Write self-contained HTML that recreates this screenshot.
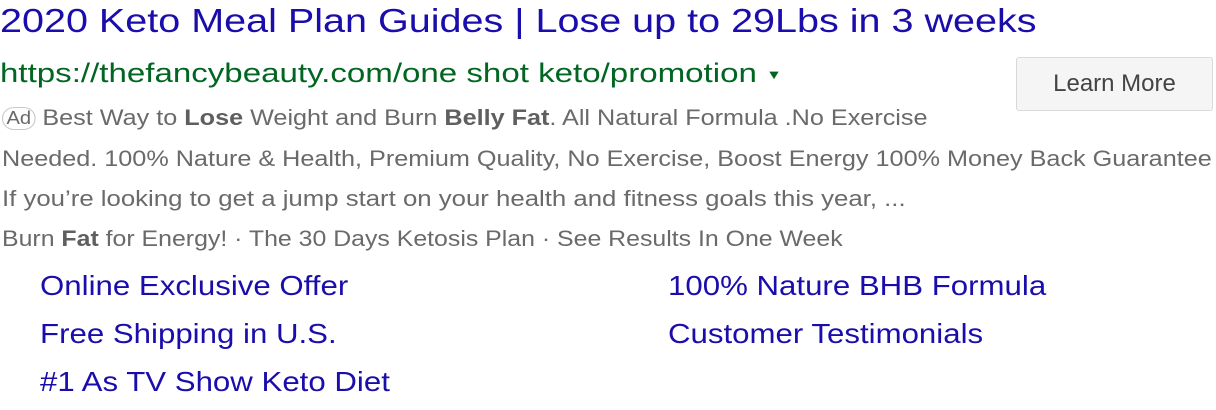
<html><head><style>
body{margin:0;width:1216px;height:410px;background:#fff;font-family:"Liberation Sans",Arial,sans-serif;position:relative;overflow:hidden}
div{position:absolute;white-space:nowrap;transform-origin:0 50%}
.t{left:0;top:3px;font-size:33.5px;color:#1a0dab;transform:scaleX(1.18)}
.u{left:0;top:58px;font-size:27px;color:#006621;transform:scaleX(1.225)}
.g{left:2px;font-size:22.5px;color:#6a6a6a;transform:scaleX(1.12)}
.g b{color:#5f5f5f}
.l{font-size:27.5px;color:#1a0dab;transform:scaleX(1.135)}
.ad{display:inline-block;border:1.5px solid #c8c8c8;border-radius:11px;font-size:18px;color:#6a6a6a;padding:0 3px;line-height:21px;vertical-align:1px;margin-right:6px}
.btn{left:1016px;top:57px;width:195px;height:52px;background:#f5f5f5;border:1px solid #d9d9d9;border-radius:3px;font-size:24px;color:#444;text-align:center;line-height:52px}
</style></head><body>
<div class="t">2020 Keto Meal Plan Guides | Lose up to 29Lbs in 3 weeks</div>
<div class="u">https://thefancybeauty.com/one shot keto/promotion <span style="font-size:13px;vertical-align:3px">▼</span></div>
<div class="btn">Learn More</div>
<div class="g" style="top:105px;left:2px"><span class="ad">Ad</span>Best Way to <b>Lose</b> Weight and Burn <b>Belly Fat</b>. All Natural Formula .No Exercise</div>
<div class="g" style="top:146px">Needed. 100% Nature &amp; Health, Premium Quality, No Exercise, Boost Energy 100% Money Back Guarantee</div>
<div class="g" style="top:186px;transform:scaleX(1.145)">If you’re looking to get a jump start on your health and fitness goals this year, ...</div>
<div class="g" style="top:226px;transform:scaleX(1.105)">Burn <b>Fat</b> for Energy! · The 30 Days Ketosis Plan · See Results In One Week</div>
<div class="l" style="left:40px;top:270px">Online Exclusive Offer</div>
<div class="l" style="left:40px;top:318px">Free Shipping in U.S.</div>
<div class="l" style="left:40px;top:366px">#1 As TV Show Keto Diet</div>
<div class="l" style="left:668px;top:270px">100% Nature BHB Formula</div>
<div class="l" style="left:668px;top:318px">Customer Testimonials</div>
</body></html>
